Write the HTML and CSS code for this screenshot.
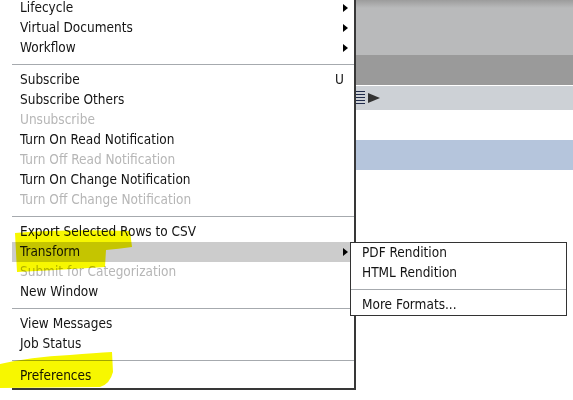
FILE: index.html
```html
<!DOCTYPE html>
<html lang="en">
<head>
    <meta charset="UTF-8">
    <title>Context Menu</title>
    <link rel="stylesheet" href="styles.css">
</head>
<body>
    <!-- Background of the page behind the menu -->
    <div class="page">
        <div class="band band-top"></div>
        <div class="band band-light"></div>
        <div class="band band-dark"></div>
        <div class="band band-tool">
            <svg class="tool-icon" width="40" height="16" viewBox="0 0 40 16">
                <g fill="#1f2a4a">
                    <rect x="4" y="1" width="9" height="1"/>
                    <rect x="4" y="4" width="9" height="1"/>
                    <rect x="4" y="7" width="9" height="1"/>
                    <rect x="4" y="10" width="9" height="1"/>
                    <rect x="4" y="13" width="9" height="1"/>
                </g>
                <polygon points="16,3 28,8 16,13" fill="#333"/>
            </svg>
        </div>
        <div class="band band-white"></div>
        <div class="band band-blue"></div>
    </div>

    <div class="menu">
        <div class="item has-sub">Lifecycle</div>
        <div class="item has-sub">Virtual Documents</div>
        <div class="item has-sub">Workflow</div>
        <div class="sep"></div>
        <div class="item">Subscribe<span class="key">U</span></div>
        <div class="item">Subscribe Others</div>
        <div class="item disabled">Unsubscribe</div>
        <div class="item">Turn On Read Notification</div>
        <div class="item disabled">Turn Off Read Notification</div>
        <div class="item">Turn On Change Notification</div>
        <div class="item disabled">Turn Off Change Notification</div>
        <div class="sep"></div>
        <div class="item">Export Selected Rows to CSV</div>
        <div class="item has-sub active">Transform
            <div class="submenu">
                <div class="item">PDF Rendition</div>
                <div class="item">HTML Rendition</div>
                <div class="sep"></div>
                <div class="item">More Formats...</div>
            </div>
        </div>
        <div class="item disabled">Submit for Categorization</div>
        <div class="item">New Window</div>
        <div class="sep"></div>
        <div class="item">View Messages</div>
        <div class="item">Job Status</div>
        <div class="sep"></div>
        <div class="item">Preferences</div>
    </div>

    <!-- Highlighter marks drawn over the screenshot -->
    <svg class="marks" width="573" height="400" viewBox="0 0 573 400">
        <path d="M15,233 Q60,229 130,231 L132,247 Q118,249 106,250 L105,267 Q60,270 17,272 Z"/>
        <path d="M0,364 Q30,357 70,355 Q95,353 112,352 L113,372 Q110,384 100,387 L0,388 Z"/>
    </svg>
</body>
</html>
```

FILE: styles.css
```css
body {
    margin: 0;
    width: 573px;
    height: 400px;
    overflow: hidden;
    position: relative;
    background: #fff;
    font-family: "DejaVu Sans Condensed", "DejaVu Sans", sans-serif;
    font-size: 13.5px;
    color: #141414;
}

.page {
    margin-left: 12px;
}

.band-top {
    height: 8px;
    background: linear-gradient(#9c9c9c, #b9babb);
}

.band-light {
    height: 47px;
    background: #b9babb;
}

.band-dark {
    height: 30px;
    border-bottom: 1px solid #fff;
    background: #9a9a9a;
}

.band-tool {
    height: 24px;
    background: #cdd1d6;
    display: flex;
    align-items: center;
    padding-left: 340px;
}

.band-white {
    height: 30px;
}

.band-blue {
    height: 30px;
    background: #b5c5dc;
}

/* Context menu */
.menu {
    position: absolute;
    left: 12px;
    top: -2px;
    width: 342px;
    padding-bottom: 2px;
    background: #fff;
    border-right: 2px solid #383838;
    border-bottom: 2px solid #383838;
}

.item {
    position: relative;
    height: 20px;
    line-height: 18px;
    padding-left: 8px;
    white-space: nowrap;
}

.item.disabled {
    color: #b6b6b6;
}

.item.active {
    background: #cccccc;
}

.has-sub::after {
    content: "";
    position: absolute;
    right: 6px;
    top: 6px;
    border-left: 5px solid #000;
    border-top: 4px solid transparent;
    border-bottom: 4px solid transparent;
}

.key {
    position: absolute;
    right: 10px;
}

.sep {
    height: 1px;
    margin: 6px 0 5px;
    background: #a6aaae;
}

/* Flyout for Transform */
.submenu {
    position: absolute;
    left: 338px;
    top: 0;
    width: 215px;
    background: #fff;
    border: 1px solid #333;
    color: #141414;
    z-index: 2;
}

.submenu .item {
    padding-left: 11px;
}

.marks {
    position: absolute;
    left: 0;
    top: 0;
    pointer-events: none;
    mix-blend-mode: multiply;
    z-index: 5;
}

.marks path {
    fill: #f7f700;
}
```
